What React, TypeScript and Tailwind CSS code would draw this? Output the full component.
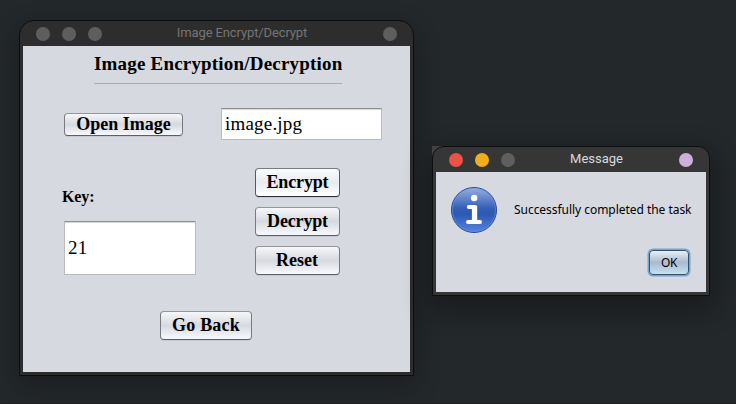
import type { ReactNode } from "react";

function Dot({ color }: { color: string }) {
  return <span className={`size-[14px] rounded-full ${color}`} />;
}

function SwingButton({ children, className = "", bright = false }: { children: ReactNode; className?: string; bright?: boolean }) {
  const fill = bright
    ? "border-t-[#777b84] border-x-[#555963] border-b-[#2b2e38] bg-linear-to-b from-[#fbfcfe] via-[#e8ebf1] to-[#ffffff]"
    : "border-t-[#94969b] border-x-[#777a80] border-b-[#5b5e65] bg-linear-to-b from-[#f6f7f9] via-[#d6d9df] to-[#f8faff]";
  return (
    <button
      className={`flex items-center justify-center whitespace-nowrap rounded-[4px] border font-bold shadow-[0_1px_0_#c6c9d0] ${fill} ${className}`}
    >
      {children}
    </button>
  );
}

function TextField({ value, className }: { value: string; className: string }) {
  return (
    <div
      className={`flex items-center border border-[#b9bbbf] border-t-[#8d8e91] bg-white pl-[3px] text-[19px] tracking-[0.2px] shadow-[inset_0_1px_0_#d9d9db] ${className}`}
    >
      {value}
    </div>
  );
}

function MainWindow() {
  return (
    <section className="absolute left-[19px] top-[20px] flex h-[356px] w-[395px] flex-col rounded-t-[15px] border border-[#0b0c0d] bg-[#2d2d2d] px-[3px] pb-[3px] shadow-[0_8px_24px_rgba(15,12,18,0.4)]">
      <header className="relative flex h-[25px] shrink-0 items-center gap-3 px-[13px] pt-[1px]">
        <Dot color="bg-[#5e5e5e]" />
        <Dot color="bg-[#5e5e5e]" />
        <Dot color="bg-[#5e5e5e]" />
        <h1 className="absolute inset-x-0 top-[3px] pl-[51px] text-center font-[Roboto,sans-serif] text-[13px] leading-[18px] tracking-[-0.12px] text-[#757575]">
          Image Encrypt/Decrypt
        </h1>
        <span className="ml-auto size-[14px] rounded-full bg-[#5e5e5e]" />
      </header>
      <main className="flex h-[326px] flex-col bg-[#d6d9e0] font-['Liberation_Serif',serif] text-black">
        <h2 className="ml-[71px] h-[38px] w-[248px] border-b border-[#a9acb5] pt-[7px] text-[19px] font-bold leading-[22px] tracking-[0.19px] whitespace-nowrap">
          Image Encryption/Decryption
        </h2>
        <div className="mt-6 flex h-8 items-start pl-[41px]">
          <SwingButton className="mt-[5px] h-[23px] w-[119px] text-[18px]">Open Image</SwingButton>
          <TextField value="image.jpg" className="ml-[38px] h-8 w-[161px]" />
        </div>
        <div className="mt-7 flex pl-[39px]">
          <div className="w-[193px] pt-[19px]">
            <label className="block text-base font-bold leading-5 tracking-[-0.1px]">Key:</label>
            <TextField value="21" className="ml-[2px] mt-[14px] h-[54px] w-[132px]" />
          </div>
          <div className="flex flex-col gap-[10px]">
            <SwingButton bright className="h-[29px] w-[85px] text-[18px] tracking-[-0.15px]">Encrypt</SwingButton>
            <SwingButton className="h-[29px] w-[85px] text-[18px] tracking-[-0.15px]">Decrypt</SwingButton>
            <SwingButton className="h-[29px] w-[85px] pr-px text-[18px]">Reset</SwingButton>
          </div>
        </div>
        <SwingButton className="ml-[137px] mt-9 h-[29px] w-[92px] text-[18px] tracking-[0.2px]">Go Back</SwingButton>
      </main>
    </section>
  );
}

function InfoIcon() {
  return (
    <svg className="size-[46px] shrink-0" viewBox="0 0 46 46">
      <defs>
        <linearGradient id="info" x1="0" y1="0" x2="0" y2="1">
          <stop offset="0" stopColor="#98b0df" />
          <stop offset=".46" stopColor="#345fb9" />
          <stop offset=".6" stopColor="#2d59b3" />
          <stop offset="1" stopColor="#5585df" />
        </linearGradient>
      </defs>
      <circle cx="23" cy="23" r="22.5" fill="url(#info)" stroke="#25499a" />
      <circle cx="23" cy="23" r="21.5" fill="none" stroke="#779bde" strokeOpacity=".5" />
      <circle cx="23.2" cy="11" r="3.2" fill="#fff" />
      <path d="M17.8 20H24V35M17 35H29" fill="none" stroke="#fff" strokeWidth="4" strokeLinecap="round" strokeLinejoin="round" />
      <path d="M20.9 19H26.2V35H20.9Z" fill="#fff" />
    </svg>
  );
}

function MessageDialog() {
  return (
    <section className="absolute left-[432px] top-[146px] flex h-[150px] w-[278px] flex-col rounded-t-[12px] border border-[#0d0e0f] bg-[#373636] px-[3px] pb-[3px] shadow-[0_10px_26px_4px_rgba(15,12,12,0.45)]">
      <header className="relative flex h-[25px] shrink-0 items-center gap-3 px-[13px] pt-[1px]">
        <Dot color="bg-[#ed524a]" />
        <Dot color="bg-[#f0ae1b]" />
        <Dot color="bg-[#5e5e5e]" />
        <h1 className="absolute inset-x-0 top-[3px] pl-[51px] text-center font-[Roboto,sans-serif] text-[13px] leading-[18px] text-[#dadada]">
          Message
        </h1>
        <span className="ml-auto size-[14px] rounded-full bg-[#cdb0d9]" />
      </header>
      <main className="flex h-[120px] flex-col bg-[#d6d9e0] pl-[15px] pt-[15px] text-black">
        <div className="flex h-[46px] items-center gap-[17px]">
          <InfoIcon />
          <p className="whitespace-nowrap font-['Noto_Sans',sans-serif] text-[12px] leading-4 tracking-[-0.04px]">
            Successfully completed the task
          </p>
        </div>
        <button className="ml-[198px] mt-[17px] h-[25px] w-[40px] rounded-[4px] border border-[#32526f] bg-linear-to-b from-[#e9eef3] via-[#a9bccd] to-[#c6e0f5] font-['Noto_Sans',sans-serif] text-[12px] leading-[22px] tracking-[-0.3px] shadow-[0_0_0_1.5px_#73a4d1]">
          OK
        </button>
      </main>
    </section>
  );
}

export default function App() {
  return (
    <div className="relative h-[404px] w-[736px] overflow-hidden border-b border-[#201f24] bg-[#23282b]">
      <MainWindow />
      <span className="absolute left-[432px] top-[146px] size-[10px] bg-[#48484b]" />
      <MessageDialog />
    </div>
  );
}
